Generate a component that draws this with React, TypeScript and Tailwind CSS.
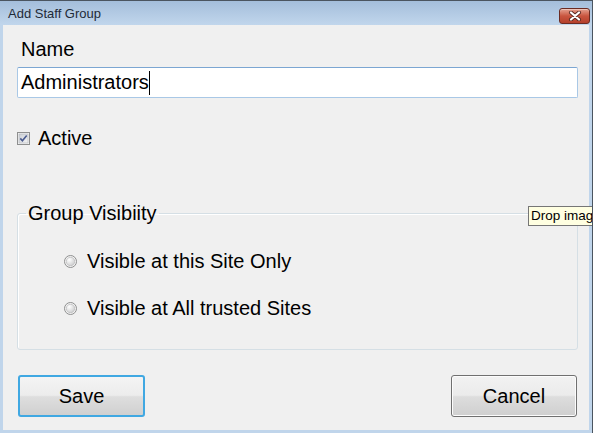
import React from 'react';

const CheckBox: React.FC = () => (
  <svg width="13" height="13" viewBox="0 0 13 13" className="shrink-0">
    <defs>
      <linearGradient id="cbg" x1="0" y1="0" x2="1" y2="1">
        <stop offset="0" stopColor="#cbcfd5" />
        <stop offset="1" stopColor="#f4f4f4" />
      </linearGradient>
    </defs>
    <rect x="0.5" y="0.5" width="12" height="12" fill="#f4f4f4" stroke="#8e8f8f" />
    <rect x="2" y="2" width="9" height="9" fill="url(#cbg)" stroke="#aeb3b9" strokeWidth="0.6" />
    <path d="M3.3 6.4 L5.4 8.8 L9.7 3.4" fill="none" stroke="#4a5b8f" strokeWidth="1.6" />
  </svg>
);

const Radio: React.FC = () => (
  <svg width="13" height="13" viewBox="0 0 13 13" className="shrink-0">
    <defs>
      <radialGradient id="rdg" cx="0.35" cy="0.3" r="0.8">
        <stop offset="0" stopColor="#ffffff" />
        <stop offset="1" stopColor="#c9cacb" />
      </radialGradient>
    </defs>
    <circle cx="6.5" cy="6.5" r="6" fill="#f2f2f2" stroke="#8e8f8f" />
    <circle cx="6.5" cy="6.5" r="4.2" fill="url(#rdg)" stroke="#b3b4b6" strokeWidth="0.6" />
  </svg>
);

const CloseGlyph: React.FC = () => (
  <svg width="14" height="10" viewBox="0 0 14 10">
    <path d="M3 1.5 L11 8.5 M11 1.5 L3 8.5" stroke="#5a2a22" strokeWidth="4" strokeLinecap="round" />
    <path d="M3 1.5 L11 8.5 M11 1.5 L3 8.5" stroke="#ffffff" strokeWidth="2.2" strokeLinecap="round" />
  </svg>
);

const App: React.FC = () => {
  return (
    <div
      className="relative w-[593px] h-[433px] overflow-hidden flex flex-col bg-[#f0f0f0] border-t border-t-[#4b5560] border-r border-r-[#4b5560] text-black"
      style={{ fontFamily: '"Liberation Sans", Arial, sans-serif' }}
    >
      {/* title bar */}
      <div className="h-[24px] shrink-0 flex items-center justify-between pl-[8px] pr-[2px] bg-gradient-to-b from-[#a4bedb] to-[#c1d6ec]">
        <span className="text-[13px] leading-[16px] mt-[2px] text-[#1e2a38]">Add Staff Group</span>
        <div className="mt-[5px] w-[31px] h-[16px] rounded-[3px] border border-[#6b2b22] bg-gradient-to-b from-[#e3a08f] via-[#c9553f] to-[#b5402b] flex items-center justify-center shadow-[inset_0_1px_0_rgba(255,255,255,0.4)]">
          <CloseGlyph />
        </div>
      </div>

      {/* client area */}
      <div className="flex-1 flex flex-col border-l-[3px] border-b-[3px] border-r-[3px] border-[#c0d5eb] pl-[14px] pr-[11px] text-[20px] leading-[23px]">
        <div className="mt-[13px] ml-[4px]">Name</div>

        <div className="mt-[6px] h-[31px] w-[561px] flex items-center pl-[3px] bg-white border border-[#a9c8e6] border-t-[#7ca6d2] rounded-[2px]">
          <span>Administrators</span>
          <span className="inline-block w-px h-[24px] bg-black" />
        </div>

        <div className="mt-[29px] flex items-center gap-[8px]">
          <CheckBox />
          <span>Active</span>
        </div>

        <fieldset className="mt-[52px] w-[561px] border border-[#d5dfe5] rounded-[3px] shadow-[inset_1px_1px_0_#ffffff] pb-[29px] min-w-0">
          <legend className="ml-[8px] px-[2px]">Group Visibiity</legend>
          <div className="mt-[25px] pl-[46px] flex flex-col gap-[24px]">
            <div className="flex items-center gap-[10px]">
              <Radio />
              <span>Visible at this Site Only</span>
            </div>
            <div className="flex items-center gap-[10px]">
              <Radio />
              <span>Visible at All trusted Sites</span>
            </div>
          </div>
        </fieldset>

        <div className="mt-[25px] flex justify-between w-[560px]">
          <button className="ml-[1px] w-[127px] h-[42px] rounded-[3px] border-2 border-[#40a8e2] bg-[linear-gradient(to_bottom,#f4f4f4_0%,#ececec_48%,#dedede_52%,#d0d0d0_100%)] text-[20px] leading-[23px]">
            Save
          </button>
          <button className="w-[126px] h-[42px] rounded-[3px] border border-[#707070] bg-[linear-gradient(to_bottom,#f2f2f2_0%,#ebebeb_48%,#dddddd_52%,#cfcfcf_100%)] shadow-[inset_0_0_0_1px_#fcfcfc] text-[20px] leading-[23px]">
            Cancel
          </button>
        </div>
      </div>

      {/* tooltip, cut off by the screen edge as in the capture */}
      <div className="absolute left-[528px] top-[205px] h-[20px] w-[120px] bg-[#ffffe1] border border-[#767676] pl-[2px] text-[13.5px] leading-[18px] whitespace-nowrap">
        Drop image
      </div>
    </div>
  );
};

export default App;
